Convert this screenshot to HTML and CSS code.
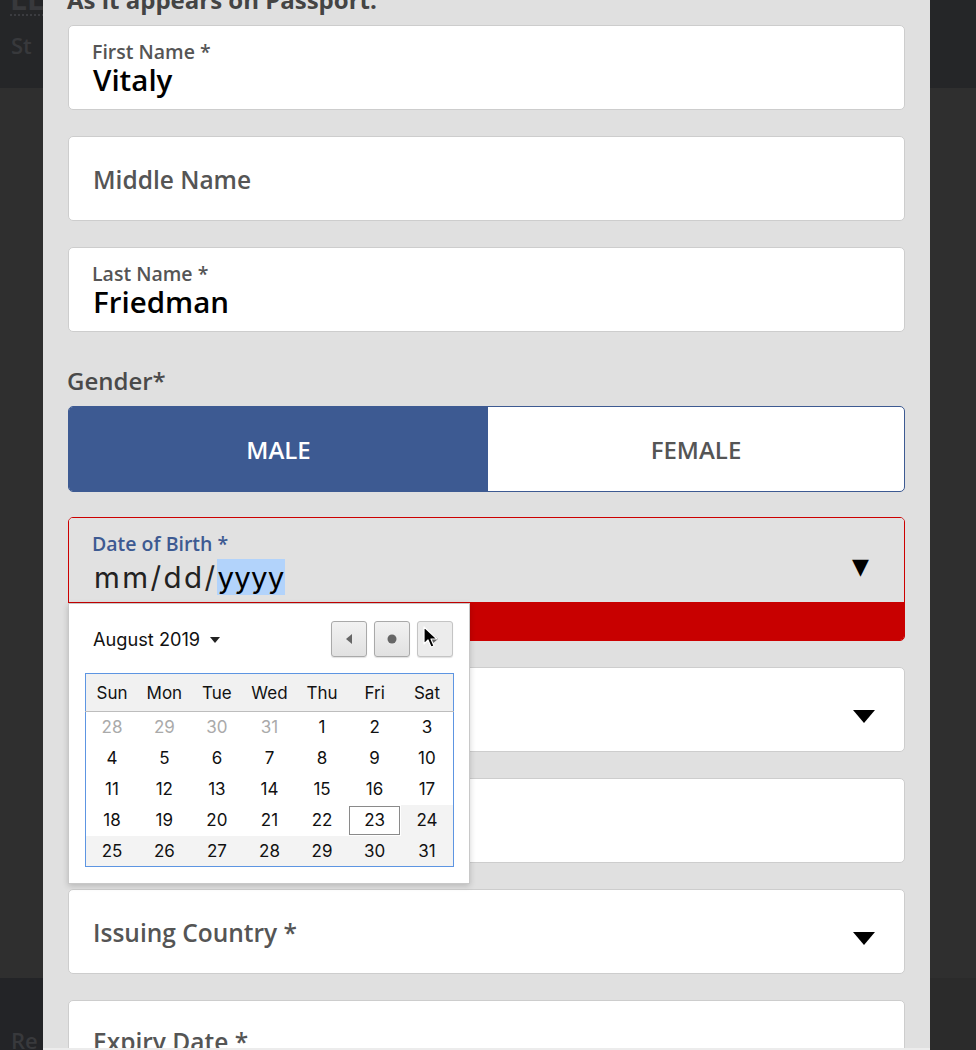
FILE: index.html
```html
<!DOCTYPE html>
<html>
<head>
<meta charset="utf-8">
<link rel="stylesheet" href="styles.css">
</head>
<body>
<div class="page">
  <aside class="side side-left">
    <div class="band band-top"><span class="ghost ghost-ll">LL</span><span class="ghost ghost-st">St</span></div>
    <div class="band band-mid"></div>
    <div class="band band-bot"><span class="ghost ghost-re">Re</span></div>
  </aside>
  <main class="modal">
    <div class="modal-inner">
      <h2 class="heading">As it appears on Passport.</h2>

      <div class="field">
        <div class="label">First Name *</div>
        <div class="value">Vitaly</div>
      </div>

      <div class="field field-empty">
        <div class="placeholder">Middle Name</div>
      </div>

      <div class="field">
        <div class="label">Last Name *</div>
        <div class="value">Friedman</div>
      </div>

      <div class="group-label">Gender*</div>
      <div class="toggle">
        <div class="toggle-opt active">MALE</div>
        <div class="toggle-opt">FEMALE</div>
      </div>

      <div class="dob-wrap">
        <div class="dob">
          <div class="dob-text">
            <div class="label label-blue">Date of Birth *</div>
            <div class="dob-value">mm/dd/<span class="sel">yyyy</span></div>
          </div>
          <span class="dob-arrow">&#9660;</span>
        </div>
        <div class="error-bar"></div>

        <div class="picker">
          <div class="picker-head">
            <div class="month">August 2019 <span class="caret"></span></div>
            <div class="navs">
              <button class="nav"><svg width="8" height="10" viewBox="0 0 8 10"><polygon points="7,0 7,10 1,5" fill="#666"/></svg></button>
              <button class="nav"><svg width="10" height="10" viewBox="0 0 10 10"><circle cx="5" cy="5" r="4.5" fill="#666"/></svg></button>
              <button class="nav nav-hover"><svg width="8" height="10" viewBox="0 0 8 10"><polygon points="1,0 1,10 7,5" fill="#666"/></svg></button>
            </div>
          </div>
          <table class="cal">
            <thead>
              <tr><th>Sun</th><th>Mon</th><th>Tue</th><th>Wed</th><th>Thu</th><th>Fri</th><th>Sat</th></tr>
            </thead>
            <tbody>
              <tr><td class="other">28</td><td class="other">29</td><td class="other">30</td><td class="other">31</td><td>1</td><td>2</td><td>3</td></tr>
              <tr><td>4</td><td>5</td><td>6</td><td>7</td><td>8</td><td>9</td><td>10</td></tr>
              <tr><td>11</td><td>12</td><td>13</td><td>14</td><td>15</td><td>16</td><td>17</td></tr>
              <tr><td>18</td><td>19</td><td>20</td><td>21</td><td>22</td><td class="today">23</td><td class="future">24</td></tr>
              <tr class="future"><td>25</td><td>26</td><td>27</td><td>28</td><td>29</td><td>30</td><td>31</td></tr>
            </tbody>
          </table>
          <svg class="cursor" width="16" height="24" viewBox="0 0 16 24"><path d="M1 1 L1 18 L5 14 L8 21 L11 20 L8 13 L14 13 Z" fill="#000" stroke="#fff" stroke-width="1.2" stroke-linejoin="round"/></svg>
        </div>
      </div>

      <div class="field field-empty">
        <div class="placeholder"></div>
        <span class="arrow"></span>
      </div>

      <div class="field field-empty">
        <div class="placeholder"></div>
      </div>

      <div class="field field-empty">
        <div class="placeholder">Issuing Country *</div>
        <span class="arrow"></span>
      </div>

      <div class="field field-empty field-last">
        <div class="placeholder">Expiry Date *</div>
      </div>
    </div>
  </main>
  <aside class="side side-right">
    <div class="band band-top"></div>
    <div class="band band-mid"></div>
    <div class="band band-bot"></div>
  </aside>
</div>
</body>
</html>
```

FILE: styles.css
```css
* { box-sizing: border-box; }
html, body { margin: 0; padding: 0; }
body {
  width: 976px;
  height: 1050px;
  overflow: hidden;
  font-family: "Open Sans", "Noto Sans", sans-serif;
  background: #2f2f2f;
}
.page {
  display: grid;
  grid-template-columns: 43px 887px 46px;
  height: 1050px;
}
.side {
  display: flex;
  flex-direction: column;
  overflow: hidden;
}
.band { position: relative; overflow: hidden; }
.band-top { height: 88px; background: #252628; }
.band-mid { height: 890px; background: #2f2f2f; }
.band-bot { flex: 1; background: #232427; }
.side-right .band-bot { background: #2b2b2b; }

.ghost {
  position: absolute;
  color: #38393c;
  font-weight: 700;
  font-family: "Open Sans", sans-serif;
}
.ghost-ll { left: 10px; top: -16px; font-size: 30px; border-bottom: 2px dotted #3b3c40; line-height: 30px; }
.ghost-st { left: 11px; top: 30px; font-size: 22px; font-weight: 600; }
.ghost-re { left: 11px; top: 47px; font-size: 22px; font-weight: 600; }

.modal {
  background: #e0e0e0;
  overflow: hidden;
  height: 1050px;
  border-bottom: 2px solid #ececec;
}
.modal-inner {
  margin-top: -16px;
  padding: 0 25px;
  display: flex;
  flex-direction: column;
}
.heading {
  margin: 0 0 9px -1px;
  font-size: 24px;
  line-height: 32px;
  font-weight: 700;
  color: #444;
}
.field {
  height: 85px;
  background: #fff;
  border: 1px solid #cdcdcd;
  border-radius: 5px;
  margin-bottom: 26px;
  padding: 15px 24px 0 23px;
  position: relative;
  flex-shrink: 0;
}
.label {
  font-size: 19.5px;
  line-height: 22px;
  font-weight: 600;
  color: #555;
}
.label-blue { color: #3d5a92; }
.value {
  font-size: 29.5px;
  line-height: 34px;
  font-weight: 600;
  color: #000;
  margin-left: 1px;
}
.field-empty {
  padding: 0 24px;
  display: flex;
  align-items: center;
  justify-content: space-between;
}
.placeholder {
  font-size: 24.5px;
  font-weight: 600;
  color: #555;
  padding-top: 2px;
}
.field-last { align-items: flex-start; padding-top: 22px; }
.arrow {
  width: 0; height: 0;
  border-left: 11.5px solid transparent;
  border-right: 11.5px solid transparent;
  border-top: 13px solid #000;
  margin-right: 5px;
  margin-top: 13px;
}
.group-label {
  padding-top: 9px;
  font-size: 24px;
  line-height: 28px;
  font-weight: 600;
  color: #4a4a4a;
  margin-bottom: 11px;
  margin-left: -1px;
}
.toggle {
  display: grid;
  grid-template-columns: 419px 1fr;
  height: 86px;
  border: 1px solid #3d5a92;
  border-radius: 5px;
  overflow: hidden;
  background: #fff;
  margin-bottom: 25px;
}
.toggle-opt {
  display: flex;
  align-items: center;
  justify-content: center;
  font-size: 24px;
  font-weight: 600;
  color: #555;
}
.toggle-opt.active { background: #3d5a92; color: #fff; }

.dob-wrap {
  position: relative;
  border: 1px solid #c00;
  border-radius: 5px;
  margin-bottom: 26px;
}
.dob {
  height: 84px;
  background: #e1e1e1;
  border-radius: 4px 4px 0 0;
  display: flex;
  justify-content: space-between;
  padding: 15px 35px 0 23px;
}
.dob-value {
  font-family: Inter, "Liberation Sans", Arial, sans-serif;
  font-size: 29.5px;
  line-height: 31px;
  color: #222;
  letter-spacing: 2.4px;
  margin-left: 2px;
  margin-top: 7px;
}
.sel { background: #b2d3fb; color: #000; letter-spacing: 0.2px; }
.dob-arrow {
  font-family: "DejaVu Sans", sans-serif;
  font-size: 22px;
  color: #000;
  margin-top: 21px;
}
.error-bar {
  height: 38px;
  background: #c80000;
  border-radius: 0 0 4px 4px;
}

.picker {
  position: absolute;
  left: -1px;
  top: 85px;
  width: 402px;
  height: 281px;
  background: #fff;
  border: 1px solid #c8c8c8;
  box-shadow: 0 2px 6px rgba(0,0,0,0.18);
  padding: 17px 16px 0 16px;
  font-family: Inter, "Liberation Sans", Arial, sans-serif;
  z-index: 5;
}
.picker-head {
  display: flex;
  justify-content: space-between;
  align-items: center;
  height: 36px;
  margin-bottom: 16px;
}
.month {
  font-size: 18.2px;
  color: #111;
  padding-left: 8px;
  display: flex;
  align-items: center;
  gap: 10px;
}
.caret {
  width: 0; height: 0;
  border-left: 5.5px solid transparent;
  border-right: 5.5px solid transparent;
  border-top: 6px solid #222;
  margin-top: 2px;
}
.navs { display: flex; gap: 7px; }
.nav {
  width: 36px;
  height: 36px;
  border: 1px solid #a9a9a9;
  border-radius: 3px;
  background: linear-gradient(#f2f2f2, #e1e1e1);
  display: flex;
  align-items: center;
  justify-content: center;
  padding: 0;
  box-shadow: 0 1px 1px rgba(0,0,0,0.12);
}
.nav-hover { background: #ececec; border-color: #c4c4c4; }
.cal {
  width: 369px;
  border-collapse: collapse;
  border: 1px solid #5d95e2;
  table-layout: fixed;
}
.cal th {
  height: 38px;
  background: #f1f1f1;
  font-weight: 400;
  font-size: 17px;
  color: #111;
  border-bottom: 1px solid #bdbdbd;
  text-align: center;
}
.cal td {
  height: 31px;
  text-align: center;
  font-size: 17px;
  color: #111;
  padding: 0;
}
.cal td.other { color: #aaa; }
.cal .future, .cal .future td { background: #f3f3f3; }
.cal td.today { outline: 1px solid #8a8a8a; outline-offset: -2px; }
.cursor {
  position: absolute;
  left: 354px;
  top: 22px;
}
```
